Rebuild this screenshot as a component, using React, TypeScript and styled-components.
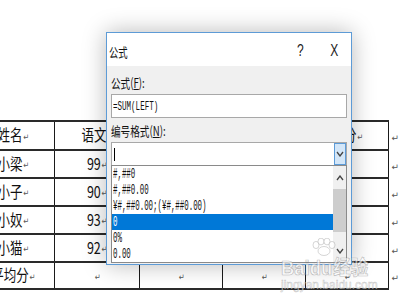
import React from "react";
import styled, { createGlobalStyle } from "styled-components";

const Global = createGlobalStyle`
  html, body { margin: 0; padding: 0; background: #fff; }
  body { width: 400px; height: 300px; overflow: hidden; }
`;

const CJK = `"Noto Sans CJK SC", "Noto Sans", sans-serif`;
const MONO = `"Liberation Mono", "Noto Sans CJK SC", monospace`;

const Page = styled.div`
  position: relative;
  width: 400px;
  height: 300px;
  overflow: hidden;
  background: #fff;
  padding-top: 120px;
  box-sizing: border-box;
`;

const Squash = styled.span<{ $s?: number; $o?: string }>`
  display: inline-block;
  white-space: nowrap;
  transform: scaleX(${(p) => p.$s ?? 0.72});
  transform-origin: ${(p) => p.$o ?? "left"} center;
`;

/* ---------- Word table ---------- */
const Table = styled.table`
  border-collapse: collapse;
  table-layout: fixed;
  margin-left: -29px;
  font-family: ${CJK};
  font-size: 16px;
  color: #111;
`;

const Row = styled.tr<{ $h: number }>`
  height: ${(p) => p.$h}px;
`;

const Cell = styled.td`
  border-top: 2px solid #2a2a2a;
  border-bottom: 2px solid #2a2a2a;
  border-left: 1px solid #1a1a1a;
  border-right: 1px solid #1a1a1a;
  padding: 0;
  text-align: center;
  vertical-align: middle;
  line-height: 18px;
  overflow: hidden;
`;

const EndCell = styled.td`
  padding: 0 0 0 1px;
  border: none;
  vertical-align: middle;
`;

const Mark = styled.span`
  font-family: "DejaVu Sans", sans-serif;
  font-size: 9px;
  color: #555;
  vertical-align: middle;
  margin-left: 1px;
`;

/* ---------- Dialog ---------- */
const Dialog = styled.div`
  position: absolute;
  left: 106px;
  top: 32px;
  width: 246px;
  height: 233px;
  box-sizing: border-box;
  border: 1px solid #5d9bd6;
  background: #f0f0f0;
  box-shadow: 0 0 22px rgba(0, 0, 0, 0.28);
  font-family: ${CJK};
  font-size: 13px;
  color: #111;
  display: flex;
  flex-direction: column;
`;

const TitleBar = styled.div`
  height: 33px;
  background: #fff;
  display: flex;
  align-items: center;
  padding: 3px 0 0 2px;
  box-sizing: border-box;
`;

const Title = styled.div`
  flex: 1;
  font-size: 13px;
`;

const TitleButton = styled.div<{ $w: number }>`
  width: ${(p) => p.$w}px;
  text-align: center;
  font-family: "Liberation Sans", sans-serif;
  font-size: 16px;
  color: #222;
`;

const Body = styled.div`
  flex: 1;
  padding: 7px 4px 0 4px;
  display: flex;
  flex-direction: column;
`;

const Label = styled.div`
  height: 20px;
  line-height: 20px;
  margin-bottom: 1px;
`;

const U = styled.span`
  text-decoration: underline;
`;

const Input = styled.div`
  height: 24px;
  box-sizing: border-box;
  background: #fff;
  border: 1px solid #a8a8a8;
  padding-left: 1px;
  display: flex;
  align-items: center;
  font-family: ${MONO};
  font-size: 13px;
  margin-bottom: 3px;
`;

const Combo = styled.div`
  height: 23px;
  box-sizing: border-box;
  background: #fff;
  border: 1px solid #a8a8a8;
  border-bottom: none;
  display: flex;
  align-items: stretch;
`;

const Caret = styled.div`
  flex: 1;
  display: flex;
  align-items: center;
  padding-left: 2px;
  &::before {
    content: "";
    width: 1px;
    height: 13px;
    background: #000;
  }
`;

const DropButton = styled.div`
  width: 12px;
  box-sizing: border-box;
  border: 1px solid #5c9bd8;
  background: #d3e6f8;
  display: flex;
  align-items: center;
  justify-content: center;
`;

const List = styled.div`
  height: 98px;
  box-sizing: border-box;
  border: 1px solid #8a8a8a;
  background: #fff;
  display: flex;
`;

const Items = styled.div`
  flex: 1;
  display: flex;
  flex-direction: column;
`;

const Item = styled.div<{ $sel?: boolean }>`
  height: 16px;
  line-height: 16px;
  padding-left: 1px;
  font-family: ${MONO};
  font-size: 14px;
  background: ${(p) => (p.$sel ? "#0078d7" : "transparent")};
  color: ${(p) => (p.$sel ? "#fff" : "#111")};
`;

const ScrollBar = styled.div`
  width: 13px;
  background: #f0f0f0;
  display: flex;
  flex-direction: column;
`;

const ScrollBtn = styled.div<{ $h: number }>`
  height: ${(p) => p.$h}px;
  display: flex;
  align-items: center;
  justify-content: center;
`;

const Thumb = styled.div`
  height: 43px;
  background: #cdcdcd;
`;

const Spacer = styled.div`
  flex: 1;
`;

/* ---------- watermark ---------- */
const Watermark = styled.div`
  position: absolute;
  left: 281px;
  top: 238px;
  display: flex;
  flex-direction: column;
  align-items: flex-start;
  pointer-events: none;
  opacity: 0.75;
`;

const WmMain = styled.div`
  display: flex;
  align-items: center;
  font-family: "Liberation Sans", sans-serif;
  font-weight: bold;
  font-size: 21px;
  line-height: 21px;
  color: rgba(255, 255, 255, 0.9);
  -webkit-text-stroke: 0.7px rgba(110, 110, 110, 0.6);
`;

const WmCn = styled.span`
  font-family: ${CJK};
  font-size: 20px;
  font-weight: bold;
  margin-left: 1px;
`;

const WmSub = styled.div`
  font-family: "Liberation Sans", sans-serif;
  font-size: 12px;
  line-height: 13px;
  color: rgba(255, 255, 255, 0.9);
  -webkit-text-stroke: 0.5px rgba(110, 110, 110, 0.55);
  margin-top: 1px;
`;

const Chevron = ({ up }: { up?: boolean }) => (
  <svg width="8" height="6" viewBox="0 0 8 6">
    <polyline
      points={up ? "1,5 4,1 7,5" : "1,1 4,5 7,1"}
      fill="none"
      stroke="#444"
      strokeWidth="1.3"
    />
  </svg>
);

const Paw = () => (
  <svg width="26" height="18" viewBox="0 0 26 18" style={{ marginLeft: 30 }}>
    <g fill="rgba(255,255,255,0.9)" stroke="rgba(120,120,120,0.5)" strokeWidth="0.8">
      <ellipse cx="5" cy="7" rx="3" ry="3.6" />
      <ellipse cx="10" cy="3.5" rx="3" ry="3.4" />
      <ellipse cx="16" cy="3.5" rx="3" ry="3.4" />
      <ellipse cx="21" cy="7" rx="3" ry="3.6" />
      <ellipse cx="13" cy="13" rx="6" ry="4.5" />
    </g>
  </svg>
);

const T = ({ text }: { text: string }) => (
  <Squash $s={0.78} $o="center">
    {text}
    <Mark>↵</Mark>
  </Squash>
);

const rows: { h: number; cells: string[] }[] = [
  { h: 29, cells: ["姓名", "语文", "数学", "英语", "总分"] },
  { h: 28, cells: ["小梁", "99", "88", "95", ""] },
  { h: 28, cells: ["小子", "90", "92", "87", ""] },
  { h: 28, cells: ["小奴", "93", "85", "90", ""] },
  { h: 28, cells: ["小猫", "92", "96", "89", ""] },
  { h: 27, cells: ["平均分", "", "", "", ""] },
];

const formats = [
  "#,##0",
  "#,##0.00",
  "¥#,##0.00;(¥#,##0.00)",
  "0",
  "0%",
  "0.00",
];

export default function App() {
  return (
    <>
      <Global />
      <Page>
        <Table>
          <colgroup>
            <col style={{ width: 84 }} />
            <col style={{ width: 86 }} />
            <col style={{ width: 85 }} />
            <col style={{ width: 84 }} />
            <col style={{ width: 85 }} />
            <col style={{ width: 10 }} />
          </colgroup>
          <tbody>
            {rows.map((r, i) => (
              <Row key={i} $h={r.h}>
                {r.cells.map((c, j) => (
                  <Cell key={j}>
                    <T text={c} />
                  </Cell>
                ))}
                <EndCell>
                  <Mark>↵</Mark>
                </EndCell>
              </Row>
            ))}
          </tbody>
        </Table>

        <Dialog>
          <TitleBar>
            <Title>
              <Squash>公式</Squash>
            </Title>
            <TitleButton $w={33}>
              <Squash $s={0.75} $o="center">?</Squash>
            </TitleButton>
            <TitleButton $w={34}>
              <Squash $s={0.75} $o="center">X</Squash>
            </TitleButton>
          </TitleBar>
          <Body>
            <Label>
              <Squash $s={0.74}>
                公式(<U>F</U>):
              </Squash>
            </Label>
            <Input>
              <Squash $s={0.58}>=SUM(LEFT)</Squash>
            </Input>
            <Label>
              <Squash $s={0.74}>
                编号格式(<U>N</U>):
              </Squash>
            </Label>
            <Combo>
              <Caret />
              <DropButton>
                <Chevron />
              </DropButton>
            </Combo>
            <List>
              <Items>
                {formats.map((f) => (
                  <Item key={f} $sel={f === "0"}>
                    <Squash $s={0.53}>{f}</Squash>
                  </Item>
                ))}
              </Items>
              <ScrollBar>
                <ScrollBtn $h={23}>
                  <Chevron up />
                </ScrollBtn>
                <Thumb />
                <Spacer />
                <ScrollBtn $h={22}>
                  <Chevron />
                </ScrollBtn>
              </ScrollBar>
            </List>
          </Body>
        </Dialog>

        <Watermark>
          <Paw />
          <WmMain>
            <Squash $s={0.88}>
              Baidu<WmCn>经验</WmCn>
            </Squash>
          </WmMain>
          <WmSub>jingyan.baidu.com</WmSub>
        </Watermark>
      </Page>
    </>
  );
}
